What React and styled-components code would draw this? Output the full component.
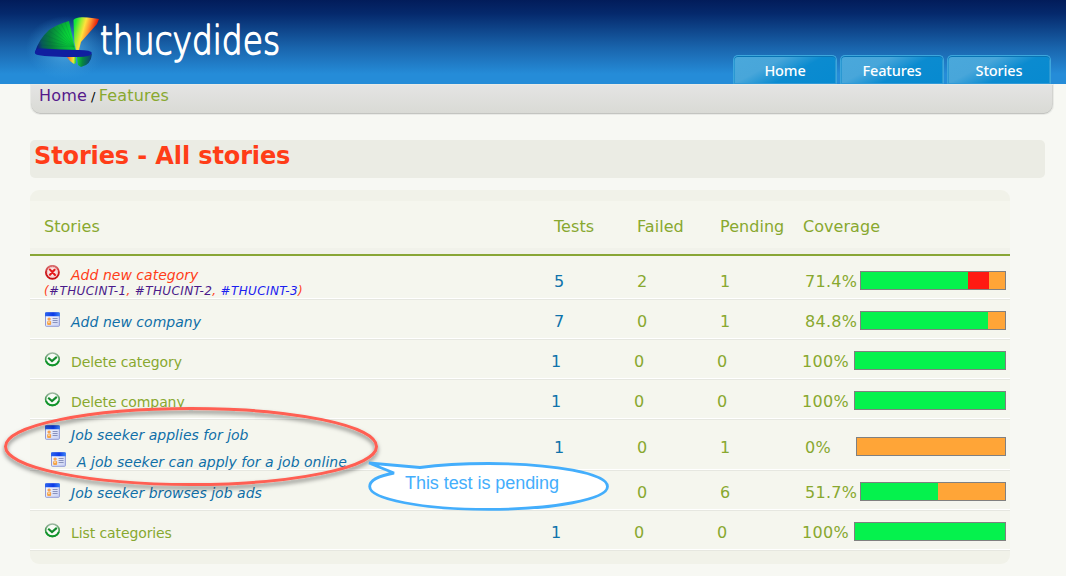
import React from "react";
import styled, { createGlobalStyle } from "styled-components";

const GlobalStyle = createGlobalStyle`
  body {
    margin: 0;
    background: #f7f8f3;
    font-family: "DejaVu Sans", sans-serif;
    color: #88a82f;
    overflow: hidden;
  }
`;

const Page = styled.div`
  position: relative;
  width: 1066px;
  height: 576px;
  overflow: hidden;
`;

const Header = styled.header`
  display: flex;
  justify-content: space-between;
  align-items: flex-end;
  height: 84px;
  box-sizing: border-box;
  padding: 0 15px 0 20px;
  background: linear-gradient(#021c5a 0%, #05296c 16%, #1a66ae 58%, #258cd8 88%, #258cd8 100%);
`;

const Logo = styled.svg`
  display: block;
  width: 270px;
  height: 84px;
  overflow: visible;
`;

const Nav = styled.nav`
  display: flex;
  gap: 3px;
`;

const Tab = styled.a`
  box-sizing: border-box;
  width: 104px;
  height: 29px;
  border: 1px solid #3da6dc;
  border-bottom-color: #3099d8;
  border-radius: 5px 5px 0 0;
  box-shadow: inset 0 1px 0 #0874b4, inset 1px 0 0 #2a98d2, inset -1px 0 0 #2a98d2;
  background: linear-gradient(152deg, #4aa8db 0%, #48a6da 34%, #0b8bd0 60%, #078ad0 100%);
  color: #fff;
  font: 500 14.5px/28px "Noto Sans", sans-serif;
  letter-spacing: -0.15px;
  text-align: center;
`;

const Breadcrumbs = styled.div`
  box-sizing: border-box;
  width: 1024px;
  height: 30px;
  margin-left: 30px;
  padding-left: 8px;
  border: solid #e9eae6;
  border-width: 1px 1px 0 1px;
  border-radius: 0 0 10px 10px;
  box-shadow: inset 0 -1px 0 #c3c4c0, inset -1px 0 0 #d3d4d0, 0 1px 0 #e9eae6;
  background: linear-gradient(#e4e4e3, #d9dad5);
  font-size: 16px;
  line-height: 21px;
  color: #000;
`;

const Crumb = styled.span`
  color: ${(p) => p.$color};
  font-size: ${(p) => p.$size || 16}px;
  letter-spacing: 0.2px;
  margin-right: ${(p) => p.$gap || 0}px;
`;

const Title = styled.h1`
  box-sizing: border-box;
  width: 1015px;
  height: 38px;
  margin: 26px 0 0 30px;
  padding-left: 4px;
  border-radius: 5px;
  background: #ebece4;
  color: #ff3d18;
  font-size: 24px;
  line-height: 33px;
  letter-spacing: -0.12px;
`;

const Table = styled.section`
  width: 980px;
  margin: 12px 0 0 30px;
  padding: 11px 0 13px;
  border-radius: 9px;
  background: #f1f2e9;
`;

const columns = "510px 83px 83px 83px 1fr";

const TableHead = styled.div`
  display: grid;
  grid-template-columns: ${columns};
  box-sizing: border-box;
  height: 55px;
  padding: 0 4px 0 14px;
  border-bottom: 2px solid #88a636;
  background: linear-gradient(#f5f6ee 47px, #f1f2ea 47px);
  font-size: 16px;
  line-height: 51px;
  letter-spacing: 0.05px;
`;

const Row = styled.div`
  display: grid;
  grid-template-columns: ${columns};
  box-sizing: border-box;
  height: ${(p) => p.$height}px;
  padding: 0 4px 0 14px;
  border-bottom: 1px solid #e6e7e0;
  box-shadow: inset 0 -1px 0 #fff;
  background: #f5f6ee;
`;

const StoryCell = styled.div`
  padding-top: ${(p) => p.$top + 1}px;
  color: ${(p) => p.$color};
`;

const StoryLine = styled.div`
  display: flex;
  align-items: flex-start;
  height: ${(p) => p.$height || 20}px;
  padding-left: ${(p) => p.$indent || 0}px;
`;

const StoryName = styled.span`
  margin: 1px 0 0 11px;
  font-size: 14px;
  line-height: 18px;
  font-style: ${(p) => (p.$italic ? "italic" : "normal")};
  letter-spacing: ${(p) => (p.$italic ? 0.02 : -0.1)}px;
  white-space: nowrap;
`;

const Issues = styled.div`
  margin-top: -1px;
  font-size: 12px;
  line-height: 14px;
  font-style: italic;
  letter-spacing: 0.37px;
`;

const Issue = styled.a`
  color: ${(p) => (p.$visited ? "#4a1a8a" : "#1a20f0")};
`;

const NumberCell = styled.div`
  margin-left: ${(p) => (p.$shift ? 0 : -3)}px;
  padding-top: ${(p) => p.$top}px;
  font-size: 16px;
  line-height: 22px;
  color: ${(p) => (p.$link ? "#0f73ab" : "inherit")};
`;

const CoverageCell = styled(NumberCell)`
  display: flex;
  justify-content: space-between;
  margin-left: ${(p) => (p.$shift ? 2 : -1)}px;
  letter-spacing: 0.3px;
`;

const Bar = styled.div`
  display: flex;
  flex: none;
  box-sizing: border-box;
  width: ${(p) => p.$width}px;
  height: 19px;
  border: 1px solid #808080;
  background: #ffa537;
`;

const Segment = styled.div`
  width: ${(p) => p.$width}px;
  background: ${(p) => p.$color};
`;

const Icon = styled.svg`
  display: block;
  flex: none;
  width: 16px;
  height: 16px;
`;

const Annotations = styled.svg`
  position: absolute;
  left: 0;
  top: 0;
  width: 1066px;
  height: 576px;
  pointer-events: none;
`;

function FailIcon() {
  return (
    <Icon viewBox="0 0 16 16">
      <defs>
        <linearGradient id="fail" x1="0" y1="0" x2="0" y2="1">
          <stop offset="0" stopColor="#d87070" />
          <stop offset="0.5" stopColor="#cf2224" />
          <stop offset="1" stopColor="#c80e12" />
        </linearGradient>
      </defs>
      <circle cx="8.4" cy="7.3" r="6.5" fill="#fff" stroke="url(#fail)" strokeWidth="1.9" />
      <circle cx="8.4" cy="7.3" r="5" fill="#f8e4e2" stroke="#e98b8b" strokeWidth="0.5" />
      <path d="M6 4.6l5 5.4M10.6 4.8l-4.6 5" stroke="#e51a1c" strokeWidth="2.1" strokeLinecap="round" />
    </Icon>
  );
}

function PassIcon() {
  return (
    <Icon viewBox="0 0 16 16">
      <defs>
        <linearGradient id="pass" x1="0" y1="0" x2="0" y2="1">
          <stop offset="0" stopColor="#9eb8a2" />
          <stop offset="0.45" stopColor="#4c9c58" />
          <stop offset="0.7" stopColor="#128f2a" />
          <stop offset="1" stopColor="#0d9a27" />
        </linearGradient>
      </defs>
      <ellipse cx="8.4" cy="7.3" rx="6.8" ry="6.3" fill="#f8fbf6" stroke="url(#pass)" strokeWidth="1.6" />
      <path d="M2.2 9a6.4 5.5 0 0 0 12.4 0" fill="none" stroke="#12952c" strokeWidth="1.8" />
      <path d="M4.2 5.7L8 9.1l4.8-4.2" fill="none" stroke="#128a2b" strokeWidth="2.1" />
    </Icon>
  );
}

function PendingIcon() {
  return (
    <Icon viewBox="0 0 16 16">
      <defs>
        <linearGradient id="pend" x1="0" y1="0" x2="1" y2="1">
          <stop offset="0" stopColor="#fff" />
          <stop offset="1" stopColor="#c8d0f3" />
        </linearGradient>
        <linearGradient id="pendbar" x1="0" y1="0" x2="1" y2="0">
          <stop offset="0" stopColor="#2d65ef" />
          <stop offset="0.55" stopColor="#0b3ae8" />
          <stop offset="1" stopColor="#3c82f5" />
        </linearGradient>
      </defs>
      <rect x="1.5" y="0.8" width="13.9" height="13.5" rx="0.8" fill="url(#pend)" stroke="#8791d2" strokeWidth="0.9" />
      <path d="M1 4.2V1.3Q1 .3 2 .3h13q.9 0 .9.9v3z" fill="url(#pendbar)" />
      <circle cx="5.1" cy="7.1" r="1.7" fill="#f4a354" />
      <rect x="3.1" y="8.9" width="4" height="4.2" rx="1" fill="#f6a447" />
      <rect x="4.3" y="9.4" width="1.3" height="1.5" fill="#fff0cf" />
      <path d="M8.6 6.5h5M8.6 8.5h5M8.6 10.5h5" stroke="#8992bd" strokeWidth="1" />
    </Icon>
  );
}

const icons = { fail: FailIcon, pass: PassIcon, pending: PendingIcon };
const colors = { fail: "#ff3d18", pass: "#88a82f", pending: "#0f6fa8" };

const stories = [
  {
    status: "fail", height: 44, top: 8, barTop: 15, name: "Add new category",
    issues: true, counts: [5, 2, 1], coverage: "71.4%", barWidth: 146, green: 107, red: 21,
  },
  { status: "pending", height: 40, top: 11, barTop: 11, name: "Add new company", counts: [7, 0, 1], coverage: "84.8%", barWidth: 146, green: 127 },
  { status: "pass", height: 40, top: 11, barTop: 11, name: "Delete category", counts: [1, 0, 0], coverage: "100%", barWidth: 152, green: 150 },
  { status: "pass", height: 40, top: 11, barTop: 11, name: "Delete company", counts: [1, 0, 0], coverage: "100%", barWidth: 152, green: 150 },
  {
    status: "pending", height: 51, top: 4, barTop: 17, name: "Job seeker applies for job",
    child: "A job seeker can apply for a job online", counts: [1, 0, 1], coverage: "0%", barWidth: 150, green: 0,
  },
  { status: "pending", height: 40, top: 11, barTop: 11, name: "Job seeker browses job ads", counts: ["", 0, 6], coverage: "51.7%", barWidth: 146, green: 77 },
  { status: "pass", height: 40, top: 11, barTop: 11, name: "List categories", counts: [1, 0, 0], coverage: "100%", barWidth: 152, green: 150 },
];

function StoryRow({ story }) {
  const StatusIcon = icons[story.status];
  const italic = story.status !== "pass";
  return (
    <Row $height={story.height}>
      <StoryCell $top={story.top} $color={colors[story.status]}>
        <StoryLine $height={story.child ? 27 : 20}>
          <StatusIcon />
          <StoryName $italic={italic}>{story.name}</StoryName>
        </StoryLine>
        {story.child && (
          <StoryLine $indent={6}>
            <StatusIcon />
            <StoryName $italic>{story.child}</StoryName>
          </StoryLine>
        )}
        {story.issues && (
          <Issues>
            (<Issue $visited>#THUCINT-1</Issue>, <Issue $visited>#THUCINT-2</Issue>, <Issue>#THUCINT-3</Issue>)
          </Issues>
        )}
      </StoryCell>
      {story.counts.map((n, i) => (
        <NumberCell key={i} $link={i === 0} $shift={italic} $top={story.barTop}>{n}</NumberCell>
      ))}
      <CoverageCell $shift={italic} $top={story.barTop}>
        {story.coverage}
        <Bar $width={story.barWidth}>
          <Segment $width={story.green} $color="#05f24d" />
          {story.red && <Segment $width={story.red} $color="#ff1a12" />}
        </Bar>
      </CoverageCell>
    </Row>
  );
}

function ThucydidesLogo() {
  return (
    <Logo viewBox="20 0 270 84">
      <defs>
        <radialGradient id="glow">
          <stop offset="0" stopColor="#69c4f4" stopOpacity="0.75" />
          <stop offset="1" stopColor="#3ba0e0" stopOpacity="0" />
        </radialGradient>
        <radialGradient id="fanGreen" cx="77" cy="36" r="42" gradientUnits="userSpaceOnUse">
          <stop offset="0" stopColor="#08f03a" />
          <stop offset="0.3" stopColor="#08c838" />
          <stop offset="0.65" stopColor="#077d3c" />
          <stop offset="0.85" stopColor="#075a58" />
          <stop offset="1" stopColor="#0b1c8c" />
        </radialGradient>
        <linearGradient id="fanWarm" x1="73" y1="30" x2="94" y2="36" gradientUnits="userSpaceOnUse">
          <stop offset="0" stopColor="#13e83b" />
          <stop offset="0.25" stopColor="#9eed32" />
          <stop offset="0.45" stopColor="#ffe23c" />
          <stop offset="0.68" stopColor="#ff9030" />
          <stop offset="1" stopColor="#e41208" />
        </linearGradient>
        <linearGradient id="fanLow" x1="67" y1="58" x2="91" y2="60" gradientUnits="userSpaceOnUse">
          <stop offset="0" stopColor="#ff5914" />
          <stop offset="0.27" stopColor="#f4e53a" />
          <stop offset="0.38" stopColor="#16d83a" />
          <stop offset="0.65" stopColor="#07883f" />
          <stop offset="1" stopColor="#0a3d78" />
        </linearGradient>
      </defs>
      <ellipse cx="66" cy="48" rx="40" ry="32" fill="url(#glow)" />
      <path d="M35 52Q39 39 49 30Q58 24 69 21L74 44L76 52Z" fill="url(#fanGreen)" />
      <path
        d="M74 47L38 45M74 47L41 40M74 47L45 35M74 47L49 31M74 47L53 28M74 47L57 26M74 47L61 24M74 47L65 22"
        stroke="#06503b" strokeWidth="0.4" opacity="0.4"
      />
      <path d="M73.5 20Q76 17 83 17.3Q93 18 99 19L97 24L81 42L79 50H76L74.3 42Z" fill="url(#fanWarm)" />
      <path d="M67 57L76 56L76 63L74 64Q70 62 67 57ZM77 57L92 54Q91 65 81 67L78 65Z" fill="url(#fanLow)" />
      <path d="M35 52Q36 48 42 48.6Q61 50 79 50Q91 50 92 53Q91 57 78 57Q49 57 38 55Q34 54 35 52Z" fill="#101e9f" />
      <text
        x="100" y="53.5" fill="#fff" stroke="#fff" strokeWidth="1.5" strokeLinejoin="round"
        fontFamily="DejaVu Sans, sans-serif" fontWeight="200" fontSize="39"
        textLength="180" lengthAdjust="spacingAndGlyphs"
      >
        thucydides
      </text>
    </Logo>
  );
}

export default function App() {
  return (
    <Page>
      <GlobalStyle />
      <Header>
        <ThucydidesLogo />
        <Nav>
          <Tab>Home</Tab>
          <Tab>Features</Tab>
          <Tab>Stories</Tab>
        </Nav>
      </Header>
      <Breadcrumbs>
        <Crumb $color="#551a8b" $gap={4}>Home</Crumb>
        <Crumb $color="#000" $size={13} $gap={3}>/</Crumb>
        <Crumb $color="#88a82f">Features</Crumb>
      </Breadcrumbs>
      <Title>Stories - All stories</Title>
      <Table>
        <TableHead>
          <span>Stories</span>
          <span>Tests</span>
          <span>Failed</span>
          <span>Pending</span>
          <span>Coverage</span>
        </TableHead>
        {stories.map((story) => (
          <StoryRow key={story.name} story={story} />
        ))}
      </Table>
      <Annotations viewBox="0 0 1066 576">
        <defs>
          <filter id="shadow" x="-5%" y="-15%" width="110%" height="135%">
            <feDropShadow dx="0" dy="3" stdDeviation="2" floodColor="#000" floodOpacity="0.5" />
          </filter>
        </defs>
        <ellipse cx="191" cy="446.5" rx="185.5" ry="38" fill="none" stroke="#ff5f52" strokeWidth="3" filter="url(#shadow)" />
        <path
          d="M420 467.5L369 463L394 473C378 476 369.7 481 369.7 486.5C369.7 499.3 423 509.4 488.5 509.4C554 509.4 607.5 499.3 607.5 486.5C607.5 473.7 554 463.5 488.5 463.5C462 463.5 438 465 420 467.5Z"
          fill="#fff" stroke="#44aefc" strokeWidth="2.8" strokeMiterlimit="3"
        />
        <text x="405" y="489" fill="#44aefc" fontFamily="Liberation Sans, sans-serif" fontSize="18" textLength="154">
          This test is pending
        </text>
      </Annotations>
    </Page>
  );
}
